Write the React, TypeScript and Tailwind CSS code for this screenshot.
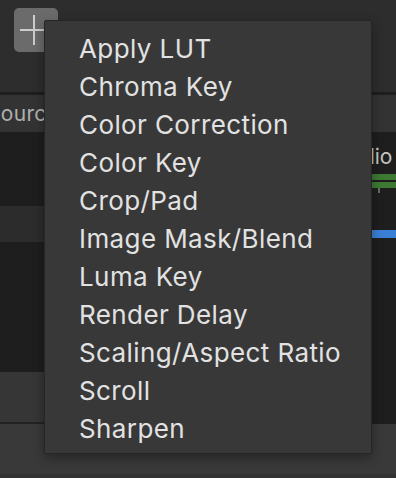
import React from "react";

const items = [
  "Apply LUT",
  "Chroma Key",
  "Color Correction",
  "Color Key",
  "Crop/Pad",
  "Image Mask/Blend",
  "Luma Key",
  "Render Delay",
  "Scaling/Aspect Ratio",
  "Scroll",
  "Sharpen",
];

export default function App() {
  return (
    <div
      className="relative w-[396px] h-[478px] overflow-hidden bg-[#2d2d2d] flex flex-col"
      style={{ fontFamily: "Inter, 'Noto Sans', sans-serif" }}
    >
      {/* top toolbar */}
      <div className="h-[92px] shrink-0 pt-[8px] pl-[14px]">
        <div className="relative w-[44px] h-[44px] rounded-[5px] bg-[#6b6b6b]">
          <div className="absolute left-[6px] top-[21px] w-[28px] h-[2px] bg-[#cdcdcd]" />
          <div className="absolute left-[19px] top-[7px] w-[2px] h-[30px] bg-[#cdcdcd]" />
        </div>
      </div>
      <div className="h-[3px] shrink-0 bg-[#1e1e1e]" />

      {/* panels */}
      <div className="flex h-[329px] shrink-0">
        {/* left: sources */}
        <div className="w-[300px] shrink-0 flex flex-col">
          <div className="h-[37px] bg-[#333333] flex items-center">
            <span className="ml-[-13px] text-[21px] tracking-[0.3px] text-[#b0b0b0] leading-none">Sources</span>
          </div>
          <div className="h-[74px] bg-[#1e1e1e]" />
          <div className="h-[36px] bg-[#2c2c2c]" />
          <div className="h-[130px] bg-[#1e1e1e]" />
          <div className="h-[50px] bg-[#363636]" />
          <div className="h-[2px] bg-[#222222]" />
        </div>
        {/* right: audio mixer */}
        <div className="flex-1 flex flex-col">
          <div className="h-[37px] bg-[#333333]" />
          <div className="flex-1 bg-[#1e1e1e] flex flex-col pl-[35px]">
            <div className="mt-[13px] text-[21px] leading-[24px] text-[#c4c4c4] whitespace-nowrap">Audio Mixer</div>
            <div className="mt-[5px] h-[6px] w-[200px] bg-[#3e7a34]" />
            <div className="mt-[2px] h-[6px] w-[200px] bg-[#3e7a34]" />
            <div className="flex">
              <div className="ml-[43px] w-[2px] h-[5px] bg-[#6a6a6a]" />
            </div>
            <div className="mt-[37px] h-[8px] w-[200px] bg-[#3a80d6]" />
          </div>
        </div>
      </div>

      {/* bottom */}
      <div className="flex-1 bg-[#393939] flex flex-col justify-end">
        <div className="h-[4px] bg-[#333333]" />
      </div>

      {/* dropdown menu */}
      <div className="absolute left-[44px] top-[20px] w-[328px] h-[434px] bg-[#383838] border border-[#262626] rounded-[2px] shadow-[0_4px_12px_rgba(0,0,0,0.35)] pt-[9px]">
        {items.map((t) => (
          <div
            key={t}
            className="h-[38px] pl-[34px] text-[26px] leading-[38px] tracking-[0.4px] text-[#e2e2e2] whitespace-nowrap"
          >
            {t}
          </div>
        ))}
      </div>
    </div>
  );
}
